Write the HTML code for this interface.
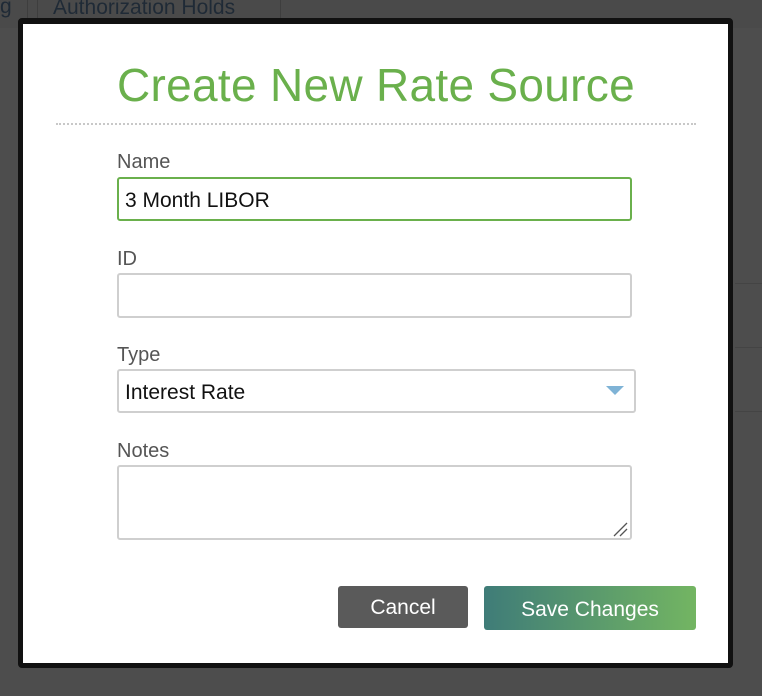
<!DOCTYPE html>
<html><head><style>
body{margin:0;width:762px;height:696px;background:#4d4d4d;position:relative;overflow:hidden;font-family:"Liberation Sans",sans-serif}
.a{position:absolute}
.lbl{position:absolute;left:117px;font-size:20px;color:#555}
.inp{position:absolute;left:117px;box-sizing:border-box;border:2px solid #cfcfcf;border-radius:3px;background:#fff;font-size:21px;color:#111;padding-left:6px}
</style></head><body>
<div class="a" style="left:0;top:0;width:762px;height:28px;background:#4a4a4a"></div>
<div class="a" style="left:27px;top:0;width:1px;height:20px;background:#3e3e3e"></div>
<div class="a" style="left:37px;top:0;width:1px;height:20px;background:#3e3e3e"></div>
<div class="a" style="left:280px;top:0;width:1px;height:20px;background:#3e3e3e"></div>
<div class="a" style="left:0;top:-5px;font-size:21px;color:#1f2a36">g</div>
<div class="a" style="left:53px;top:-4px;font-size:21px;color:#1f2a36">Authorization Holds</div>
<div class="a" style="left:735px;top:283px;width:27px;height:1px;background:#444"></div>
<div class="a" style="left:735px;top:347px;width:27px;height:1px;background:#444"></div>
<div class="a" style="left:735px;top:411px;width:27px;height:1px;background:#444"></div>
<div class="a" style="left:18px;top:18px;width:705px;height:639px;border:5px solid #111;border-top-width:6px;background:#fff;border-radius:4px"></div>
<div class="a" style="left:24px;top:58px;width:704px;text-align:center;font-size:46px;color:#6ab04c;letter-spacing:0.3px">Create New Rate Source</div>
<div class="a" style="left:56px;top:123px;width:640px;border-top:2px dotted #c8c8c8"></div>
<div class="lbl" style="top:151px">Name</div>
<div class="inp" style="top:177px;width:515px;height:44px;border-color:#6ab04c;line-height:43px">3 Month LIBOR</div>
<div class="lbl" style="top:248px">ID</div>
<div class="inp" style="top:273px;width:515px;height:45px"></div>
<div class="lbl" style="top:344px">Type</div>
<div class="inp" style="top:369px;width:519px;height:44px;line-height:43px">Interest Rate</div>
<div class="a" style="left:606px;top:386px;width:0;height:0;border-left:9px solid transparent;border-right:9px solid transparent;border-top:9px solid #7fb3d6"></div>
<div class="lbl" style="top:440px">Notes</div>
<div class="inp" style="top:465px;width:515px;height:75px"></div>
<svg class="a" style="left:612px;top:521px" width="16" height="16"><path d="M2 15L15 2M8 15L15 8" stroke="#555" stroke-width="1.3"/></svg>
<div class="a" style="left:338px;top:586px;width:130px;height:42px;background:#5a5a5a;border-radius:3px;color:#fff;font-size:21px;text-align:center;line-height:44px">Cancel</div>
<div class="a" style="left:484px;top:586px;width:212px;height:44px;background:linear-gradient(90deg,#3f7c78,#73b562);border-radius:3px;color:#fff;font-size:21px;text-align:center;line-height:48px">Save Changes</div>
</body></html>
